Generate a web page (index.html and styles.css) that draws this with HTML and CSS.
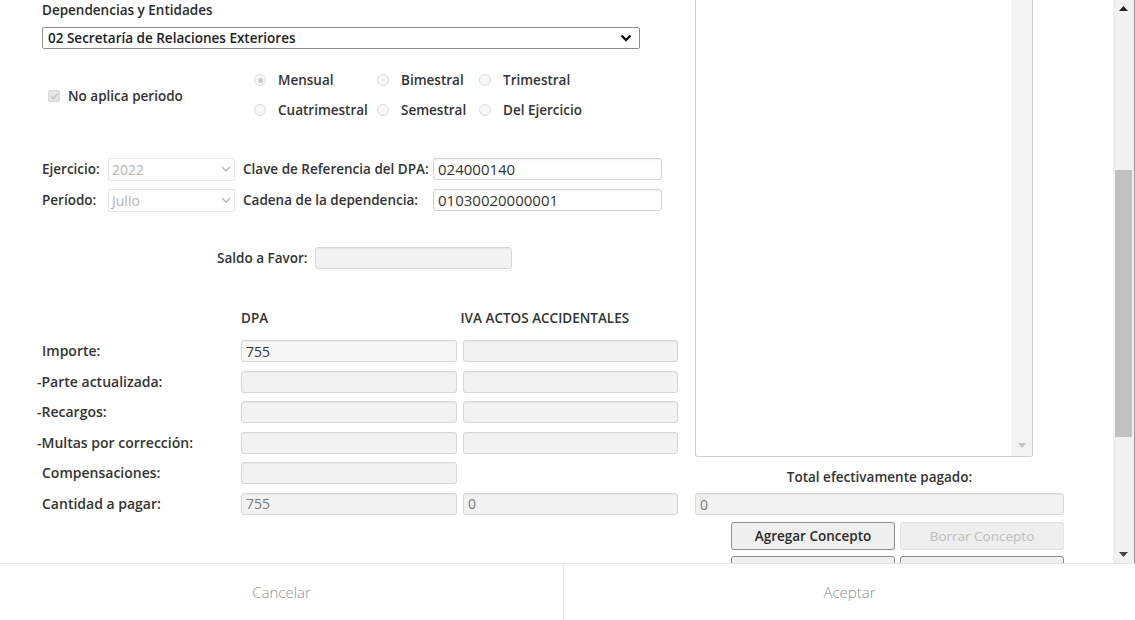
FILE: index.html
```html
<!DOCTYPE html>
<html lang="es">
<head>
    <meta charset="UTF-8">
    <title>Declaración DPA</title>
    <link rel="stylesheet" href="styles.css">
</head>
<body>
    <div class="dialog">
        <div class="dialog-body">
            <div class="content">
                <div class="form-col">
                    <div class="field-label">Dependencias y Entidades</div>
                    <div class="select select-main">
                        <span>02 Secretaría de Relaciones Exteriores</span>
                        <svg width="12" height="8" viewBox="0 0 12 8"><polyline points="1.5,1.5 6,6 10.5,1.5" fill="none" stroke="#111" stroke-width="2.4"/></svg>
                    </div>

                    <div class="period">
                        <div class="no-period">
                            <span class="check"><svg width="9" height="9" viewBox="0 0 9 9"><polyline points="1.5,4.5 3.5,6.8 7.5,1.8" fill="none" stroke="#c9c9c9" stroke-width="1.6"/></svg></span>
                            <span>No aplica periodo</span>
                        </div>
                        <div class="radios">
                            <div class="radio"><span class="dot checked"></span>Mensual</div>
                            <div class="radio"><span class="dot"></span>Bimestral</div>
                            <div class="radio"><span class="dot"></span>Trimestral</div>
                            <div class="radio"><span class="dot"></span>Cuatrimestral</div>
                            <div class="radio"><span class="dot"></span>Semestral</div>
                            <div class="radio"><span class="dot"></span>Del Ejercicio</div>
                        </div>
                    </div>

                    <div class="ref-grid">
                        <div class="lbl">Ejercicio:</div>
                        <div class="select select-off">
                            <span>2022</span>
                            <svg width="10" height="6" viewBox="0 0 10 6"><polyline points="1,1 5,5 9,1" fill="none" stroke="#b5b5b5" stroke-width="1.3"/></svg>
                        </div>
                        <div class="lbl">Clave de Referencia del DPA:</div>
                        <div class="input input-on">024000140</div>

                        <div class="lbl">Período:</div>
                        <div class="select select-off">
                            <span>Julio</span>
                            <svg width="10" height="6" viewBox="0 0 10 6"><polyline points="1,1 5,5 9,1" fill="none" stroke="#b5b5b5" stroke-width="1.3"/></svg>
                        </div>
                        <div class="lbl">Cadena de la dependencia:</div>
                        <div class="input input-on">01030020000001</div>
                    </div>

                    <div class="saldo">
                        <span class="lbl saldo-lbl">Saldo a Favor:</span>
                        <div class="input input-off saldo-input"></div>
                    </div>

                    <div class="amount-head">
                        <span class="col-head">DPA</span>
                        <span class="col-head">IVA ACTOS ACCIDENTALES</span>
                    </div>
                    <div class="amounts">
                        <div class="lbl">Importe:</div>
                        <div class="input input-off dark">755</div>
                        <div class="input input-off"></div>

                        <div class="lbl dash">-Parte actualizada:</div>
                        <div class="input input-off"></div>
                        <div class="input input-off"></div>

                        <div class="lbl dash">-Recargos:</div>
                        <div class="input input-off"></div>
                        <div class="input input-off"></div>

                        <div class="lbl dash">-Multas por corrección:</div>
                        <div class="input input-off"></div>
                        <div class="input input-off"></div>

                        <div class="lbl">Compensaciones:</div>
                        <div class="input input-off"></div>
                        <div></div>

                        <div class="lbl">Cantidad a pagar:</div>
                        <div class="input input-off">755</div>
                        <div class="input input-off">0</div>
                    </div>
                </div>

                <div class="side-col">
                    <div class="listbox">
                        <div class="listbox-bar">
                            <svg width="8" height="5" viewBox="0 0 8 5"><polygon points="0,0 8,0 4,5" fill="#c4c4c4"/></svg>
                        </div>
                    </div>
                    <div class="total-label">Total efectivamente pagado:</div>
                    <div class="input input-off total-input">0</div>
                    <div class="btn-row">
                        <button class="btn">Agregar Concepto</button>
                        <button class="btn btn-off">Borrar Concepto</button>
                    </div>
                    <div class="btn-row">
                        <button class="btn">&nbsp;</button>
                        <button class="btn">&nbsp;</button>
                    </div>
                </div>
            </div>

            <div class="scrollbar">
                <div class="scroll-btn">
                    <svg width="9" height="5" viewBox="0 0 9 5"><polygon points="0,5 9,5 4.5,0" fill="#222"/></svg>
                </div>
                <div class="scroll-track">
                    <div class="scroll-thumb"></div>
                </div>
                <div class="scroll-btn">
                    <svg width="9" height="5" viewBox="0 0 9 5"><polygon points="0,0 9,0 4.5,5" fill="#444"/></svg>
                </div>
            </div>
        </div>

        <div class="dialog-footer">
            <button class="footer-btn">Cancelar</button>
            <button class="footer-btn">Aceptar</button>
        </div>
    </div>
</body>
</html>
```

FILE: styles.css
```css
body {
    margin: 0;
    font-family: "Open Sans", "Noto Sans", sans-serif;
    font-size: 13.5px;
    color: #333;
    background-color: white;
}

.dialog {
    width: 1135px;
    height: 620px;
    display: flex;
    flex-direction: column;
    overflow: hidden;
}

.dialog-body {
    height: 563px;
    display: flex;
    overflow: hidden;
}

.content {
    flex: 1;
    display: flex;
    padding-left: 42px;
    overflow: hidden;
}

.form-col {
    width: 638px;
}

.field-label {
    padding-top: 2px;
    line-height: 16px;
    font-weight: 600;
    color: #2b2b2b;
}

.lbl {
    font-weight: 600;
    color: #333;
    line-height: 16px;
    white-space: nowrap;
}

/* Selects */
.select {
    box-sizing: border-box;
    display: flex;
    align-items: center;
    justify-content: space-between;
    border-radius: 2px;
}

.select-main {
    margin-top: 9px;
    width: 598px;
    height: 22px;
    padding: 0 7px 0 5px;
    border: 1px solid #8f8f8f;
    font-weight: 600;
    color: #222;
}

.select-off {
    width: 127px;
    height: 23px;
    padding: 0 3px 0 3px;
    border: 1px solid #e6e6e6;
    color: #b3b3b3;
    font-size: 14px;
}

/* Period choice */
.period {
    margin-top: 16px;
    display: flex;
    height: 60px;
}

.no-period {
    width: 212px;
    display: flex;
    align-items: center;
    padding-left: 6px;
    padding-top: 2px;
    font-weight: 600;
    box-sizing: border-box;
}

.check {
    width: 12px;
    height: 12px;
    margin-right: 8px;
    border-radius: 2px;
    background-color: #e4e4e4;
    border: 1px solid #d8d8d8;
    box-sizing: border-box;
    display: flex;
    align-items: center;
    justify-content: center;
}

.radios {
    display: grid;
    grid-template-columns: 123px 102px auto;
    grid-auto-rows: 30px;
}

.radio {
    display: flex;
    align-items: center;
    font-weight: 600;
}

.dot {
    width: 12px;
    height: 12px;
    margin-right: 12px;
    border-radius: 50%;
    border: 1px solid #dcdcdc;
    background-color: #f7f7f7;
    box-sizing: border-box;
    position: relative;
}

.dot.checked::after {
    content: "";
    position: absolute;
    left: 2.5px;
    top: 2.5px;
    width: 5px;
    height: 5px;
    border-radius: 50%;
    background-color: #c8c8c8;
}

/* Reference rows */
.ref-grid {
    margin-top: 33px;
    display: grid;
    grid-template-columns: 66px 135px 190px 229px;
    grid-auto-rows: 22px;
    row-gap: 9px;
    align-items: center;
}

.input {
    box-sizing: border-box;
    height: 22px;
    border-radius: 3px;
    padding: 0 6px;
    display: flex;
    align-items: center;
    font-size: 14px;
}

.input-on {
    border: 1px solid #d4d4d4;
    background-color: white;
    box-shadow: inset 0 1px 2px rgba(0, 0, 0, 0.06);
    color: #333;
    padding-left: 4px;
    font-size: 15px;
}

.input-off {
    border: 1px solid #d7d7d7;
    background-color: #f2f2f2;
    box-shadow: inset 0 1px 1px rgba(0, 0, 0, 0.04);
    color: #7a7a7a;
    padding-left: 4px;
}

.input-off.dark {
    color: #333;
    background-color: #f7f7f7;
}

.saldo {
    margin-top: 36px;
    padding-left: 175px;
    display: flex;
    align-items: center;
}

.saldo-lbl {
    width: 98px;
}

.saldo-input {
    width: 197px;
}

/* Amounts table */
.amount-head {
    margin-top: 41px;
    padding-left: 199px;
    display: flex;
    line-height: 16px;
}

.col-head {
    width: 220px;
    font-weight: 600;
}

.amounts {
    margin-top: 14px;
    display: grid;
    grid-template-columns: 193px 216px 215px;
    grid-auto-rows: 22px;
    column-gap: 6px;
    row-gap: 8.6px;
    align-items: center;
}

.amounts .lbl {
    font-size: 14px;
}

.amounts .dash {
    margin-left: -5px;
}

/* Right column */
.side-col {
    width: 369px;
    margin-left: 15px;
}

.listbox {
    width: 338px;
    height: 457px;
    box-sizing: border-box;
    border: 1px solid #cfcfcf;
    border-top: none;
    border-radius: 0 0 3px 3px;
    display: flex;
    justify-content: flex-end;
}

.listbox-bar {
    width: 21px;
    background-color: #f3f3f3;
    display: flex;
    align-items: flex-end;
    justify-content: center;
    padding-bottom: 8px;
    box-sizing: border-box;
}

.total-label {
    margin-top: 12px;
    text-align: center;
    font-weight: 600;
    line-height: 16px;
}

.total-input {
    margin-top: 8px;
    width: 369px;
}

.btn-row {
    display: flex;
    justify-content: flex-end;
    gap: 5px;
    margin-top: 7px;
}

.btn-row + .btn-row {
    margin-top: 6px;
}

.btn {
    width: 164px;
    height: 28px;
    border: 1px solid #8c8c8c;
    border-radius: 3px;
    background-color: #efefef;
    font-family: inherit;
    font-size: 13.5px;
    font-weight: 600;
    color: #2b2b2b;
}

.btn-off {
    border-color: #e2e2e2;
    background-color: #eeeeee;
    color: #bdbdbd;
    font-weight: 400;
}

/* Outer scrollbar */
.scrollbar {
    width: 21px;
    display: flex;
    flex-direction: column;
    background-color: #f1f1f1;
    border-right: 1px solid #9a9a9a;
}

.scroll-btn {
    height: 17px;
    display: flex;
    align-items: center;
    justify-content: center;
}

.scroll-track {
    flex: 1;
    padding: 0 2px;
}

.scroll-thumb {
    margin-top: 153px;
    height: 267px;
    background-color: #c1c1c1;
}

/* Footer */
.dialog-footer {
    flex: 1;
    display: flex;
    border-top: 1px solid #e4e4e4;
}

.footer-btn {
    flex: 1;
    border: none;
    background-color: white;
    font-family: inherit;
    font-size: 15px;
    font-weight: 300;
    color: #8f8f8f;
}

.footer-btn:first-child {
    flex: 0 0 564px;
    border-right: 1px solid #e4e4e4;
}
```
